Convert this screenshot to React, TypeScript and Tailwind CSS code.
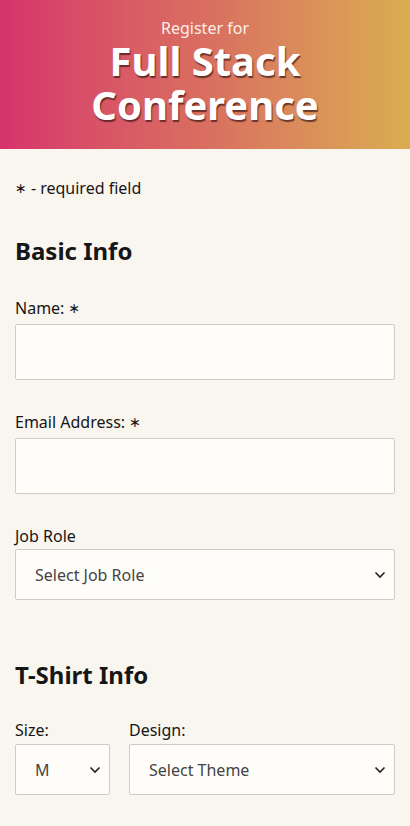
import React from "react";

const Chevron = () => (
  <svg width="12" height="8" viewBox="0 0 12 8" className="shrink-0">
    <path d="M1.5 1.5 L6 6 L10.5 1.5" fill="none" stroke="#222" strokeWidth="1.6" />
  </svg>
);

const Select = ({ text }: { text: string }) => (
  <div className="w-full h-[51px] bg-[#fffdf9] border border-[#cfcbc5] rounded-[2px] flex items-center justify-between pl-[19px] pr-[8px] text-[16px] text-[#444]">
    <span>{text}</span>
    <Chevron />
  </div>
);

const Star = () => <span className="text-[14px] align-[1px]" style={{ fontFamily: '"DejaVu Sans", sans-serif' }}>∗</span>;

export default function App() {
  return (
    <div className="min-h-[826px] bg-[#f9f5ef] text-[#161616]" style={{ fontFamily: '"Noto Sans", sans-serif' }}>
      <header className="h-[149px] bg-gradient-to-r from-[#d6336b] via-[#d96e60] to-[#d9ad50] flex flex-col items-center pt-[17px] text-white">
        <div className="text-[16px] leading-[22px] text-[#fbeee6]">Register for</div>
        <h1 className="text-[40px] font-bold leading-[44px] text-center [text-shadow:1px_2px_1px_rgba(60,20,20,0.7)]">
          Full Stack
          <br />
          Conference
        </h1>
      </header>
      <main className="px-[15px]">
        <p className="mt-[27px] text-[16px] leading-[24px]"><Star /> - required field</p>
        <h2 className="mt-[36px] text-[24px] font-bold leading-[30px]">Basic Info</h2>
        <div className="mt-[30px] text-[16px] leading-[24px]">Name: <Star /></div>
        <div className="mt-[4px] h-[56px] bg-[#fffdf9] border border-[#cfcbc5] rounded-[2px]" />
        <div className="mt-[30px] text-[16px] leading-[24px]">Email Address: <Star /></div>
        <div className="mt-[4px] h-[56px] bg-[#fffdf9] border border-[#cfcbc5] rounded-[2px]" />
        <div className="mt-[30px] text-[16px] leading-[24px]">Job Role</div>
        <div className="mt-[1px]">
          <Select text="Select Job Role" />
        </div>
        <h2 className="mt-[60px] text-[24px] font-bold leading-[30px]">T-Shirt Info</h2>
        <div className="mt-[28px] flex gap-[19px]">
          <div className="w-[95px]">
            <div className="text-[16px] leading-[24px]">Size:</div>
            <div className="mt-[2px]"><Select text="M" /></div>
          </div>
          <div className="flex-1">
            <div className="text-[16px] leading-[24px]">Design:</div>
            <div className="mt-[2px]"><Select text="Select Theme" /></div>
          </div>
        </div>
      </main>
    </div>
  );
}
